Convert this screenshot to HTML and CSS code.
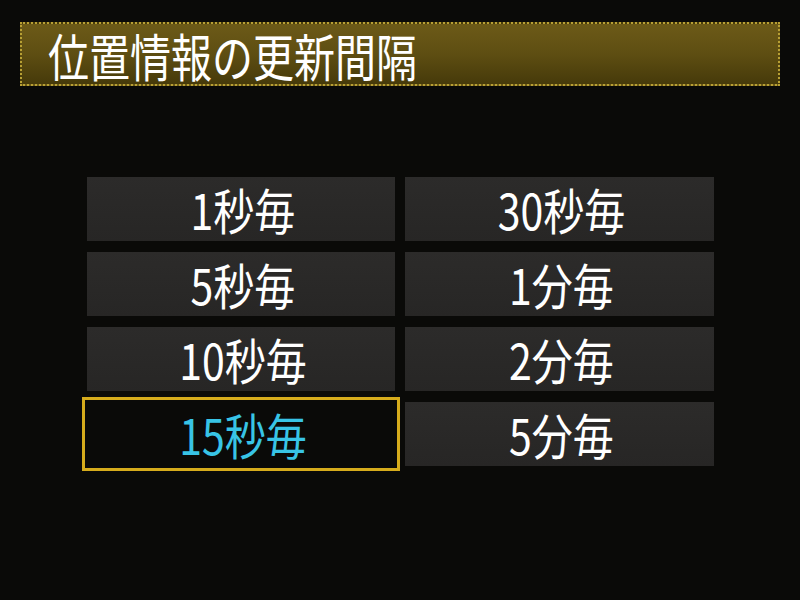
FILE: index.html
```html
<!DOCTYPE html>
<html lang="ja">
<head>
<meta charset="utf-8">
<link rel="stylesheet" href="styles.css">
</head>
<body>
<div class="screen">
  <header class="title-bar">
    <span class="title">位置情報の更新間隔</span>
  </header>
  <div class="grid">
    <div class="cell"><span class="label">1秒毎</span></div>
    <div class="cell"><span class="label">30秒毎</span></div>
    <div class="cell"><span class="label">5秒毎</span></div>
    <div class="cell"><span class="label">1分毎</span></div>
    <div class="cell"><span class="label">10秒毎</span></div>
    <div class="cell"><span class="label">2分毎</span></div>
    <div class="cell selected"><span class="label">15秒毎</span></div>
    <div class="cell"><span class="label">5分毎</span></div>
  </div>
</div>
</body>
</html>
```

FILE: styles.css
```css
html, body {
  margin: 0;
  padding: 0;
  background: #0a0a08;
}
.screen {
  width: 800px;
  height: 600px;
  padding-top: 22px;
  box-sizing: border-box;
  font-family: "Noto Sans CJK JP", "Noto Sans", sans-serif;
  color: #ffffff;
}
.title-bar {
  margin: 0 20px;
  height: 64px;
  box-sizing: border-box;
  border: 2px dotted #b8a034;
  background: linear-gradient(180deg, #6c5a18 0%, #5e4e12 50%, #463a0a 100%);
  display: flex;
  align-items: center;
  padding-left: 26px;
}
.title {
  display: inline-block;
  font-size: 41px;
  line-height: 1;
  font-weight: 400;
  transform: scaleY(1.25);
  transform-origin: center;
  margin-top: 2px;
}
.grid {
  margin: 91px 0 0 87px;
  display: grid;
  grid-template-columns: 308px 309px;
  grid-auto-rows: 64px;
  column-gap: 10px;
  row-gap: 11px;
}
.cell {
  background: linear-gradient(180deg, #2c2b2a 0%, #272625 100%);
  display: flex;
  align-items: center;
  justify-content: center;
}
.label {
  display: inline-block;
  font-size: 41px;
  line-height: 1;
  font-weight: 400;
  transform: scaleY(1.2);
  margin-left: 4px;
}
.cell.selected {
  background: #0a0a08;
  outline: 3px solid #d6ac1c;
  outline-offset: 2px;
}
.cell.selected .label {
  color: #38c4e6;
}
```
